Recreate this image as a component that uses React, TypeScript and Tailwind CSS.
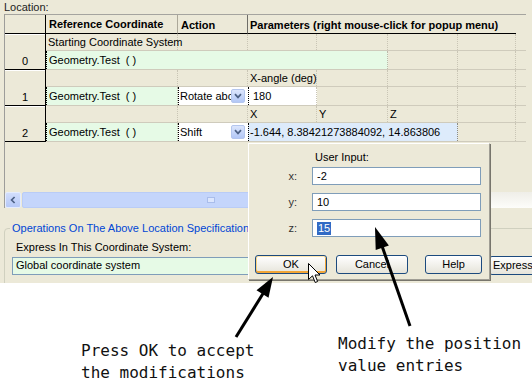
import React from 'react';

// column widths of the location grid (ref, action, then five parameter slots)
const W = ['w-[132px]', 'w-[70px]', 'w-[69px]', 'w-[71px]', 'w-[70px]', 'w-[58px]', 'w-[10px]'];
const dotted = 'border-r border-dotted border-[#C9C5B5]';
const green = 'bg-[#E6FAE6] border-l border-dotted border-l-black';

function DropBtn() {
  return (
    <span className="shrink-0 w-[14px] h-[14px] mr-[3px] rounded-[2px] border border-[#B4C6EE] bg-linear-to-b from-[#DCE6FD] to-[#B2C7F6] flex items-center justify-center">
      <svg width="8" height="6" viewBox="0 0 8 6">
        <path d="M1 1.2 L4 4.4 L7 1.2" stroke="#4D6185" strokeWidth="1.7" fill="none" />
      </svg>
    </span>
  );
}

function LabelRow({ texts }: { texts: string[] }) {
  return (
    <div className="flex h-[17px] border-b border-[#CFCBBC]">
      {W.map((w, i) => (
        <div
          key={i}
          className={`${w} shrink-0 flex items-center pl-[2px] whitespace-nowrap ${i < 6 ? dotted : ''}`}
        >
          {texts[i] ?? ''}
        </div>
      ))}
    </div>
  );
}

function RowHeader({ n }: { n: number }) {
  return (
    <div className="w-[41px] shrink-0 h-[36px] flex flex-col justify-end border-r border-b border-black shadow-[inset_0_1px_0_#fff]">
      <div className="h-[17px] pb-[1px] flex items-end justify-center">{n}</div>
    </div>
  );
}

function Combo({ text }: { text: string }) {
  return (
    <div className="w-[70px] shrink-0 bg-white border-l border-dotted border-l-black flex items-center">
      <span className="flex-1 overflow-hidden whitespace-nowrap pl-[1px]">{text}</span>
      <DropBtn />
    </div>
  );
}

function Geo({ w }: { w: string }) {
  return (
    <div className={`${w} shrink-0 ${green} border-r border-dotted border-r-[#BDB9AA] flex items-center pl-[2px] whitespace-pre`}>
      Geometry.Test  ( )
    </div>
  );
}

function LocationTable() {
  return (
    <div className="ml-[4px] w-[528px] h-[194px] border-l border-[#9D9D9A] flex flex-col">
      {/* header */}
      <div className="flex h-[20px] w-[521px] shrink-0 border-t border-[#A5A49F] font-bold">
        <div className="w-[41px] border-r border-b border-black" />
        <div className="w-[132px] border-r border-b border-r-[#ACA899] border-b-black pl-[3px] pt-[3px] overflow-hidden">
          Reference Coordinate System
        </div>
        <div className="w-[70px] border-r border-b border-r-[#6F6E68] border-b-black pl-[3px] pt-[4px]">Action</div>
        <div className="w-[268px] border-b border-black pl-[2px] pt-[4px] whitespace-nowrap overflow-hidden">
          Parameters (right mouse-click for popup menu)
        </div>
      </div>

      {/* row 0 */}
      <div className="flex w-[521px]">
        <RowHeader n={0} />
        <div className="flex-1 flex flex-col">
          <LabelRow texts={['Starting Coordinate System']} />
          <div className="flex h-[19px] border-b border-[#CFCBBC]">
            <Geo w="w-[342px]" />
            <div className={`w-[70px] ${dotted}`} />
            <div className={`w-[58px] ${dotted}`} />
            <div className="w-[10px]" />
          </div>
        </div>
      </div>

      {/* row 1 */}
      <div className="flex w-[521px]">
        <RowHeader n={1} />
        <div className="flex-1 flex flex-col">
          <LabelRow texts={['', '', 'X-angle (deg)']} />
          <div className="flex h-[19px] border-b border-[#CFCBBC]">
            <Geo w="w-[132px]" />
            <Combo text="Rotate abc" />
            <div className="w-[69px] bg-white border-l border-dotted border-l-black border-r border-r-[#C9C5B5] flex items-center pl-[4px]">180</div>
            <div className={`w-[71px] ${dotted}`} />
            <div className={`w-[70px] ${dotted}`} />
            <div className={`w-[58px] ${dotted}`} />
            <div className="w-[10px]" />
          </div>
        </div>
      </div>

      {/* row 2 */}
      <div className="flex w-[521px]">
        <RowHeader n={2} />
        <div className="flex-1 flex flex-col">
          <LabelRow texts={['', '', 'X', 'Y', 'Z']} />
          <div className="flex h-[19px] border-b border-[#CFCBBC]">
            <Geo w="w-[132px]" />
            <Combo text="Shift" />
            <div className="w-[210px] bg-[#DDEBFB] border-l border-dotted border-l-black border-r border-r-[#8F8C80] flex items-center pl-[1px] whitespace-nowrap">
              -1.644, 8.38421273884092, 14.863806
            </div>
            <div className={`w-[58px] ${dotted}`} />
            <div className="w-[10px]" />
          </div>
        </div>
      </div>

      <div className="flex-1" />

      {/* horizontal scroll bar */}
      <div className="h-[16px] flex shrink-0">
        <div className="w-[16px] rounded-[2px] border border-[#E4ECFE] bg-linear-to-b from-[#D2DEFC] to-[#B6C9F7] flex items-center justify-center">
          <svg width="6" height="8" viewBox="0 0 6 8">
            <path d="M4.6 1 L1.6 4 L4.6 7" stroke="#4D6185" strokeWidth="1.7" fill="none" />
          </svg>
        </div>
        <div className="w-[378px] ml-[1px] rounded-[2px] border border-[#B9CCF6] bg-[#C4D5FB] flex items-center justify-center">
          <div className="w-[8px] h-[6px] border border-[#A9BDEB] bg-[#DCE6FD]" />
        </div>
        <div className="flex-1 bg-linear-to-b from-[#EFEEE8] to-[#FDFDFA]" />
      </div>
    </div>
  );
}

function XpButton({ label, w, primary }: { label: string; w: string; primary?: boolean }) {
  return (
    <div
      className={`${w} h-[19px] rounded-[3px] border border-[#1C4A7E] bg-linear-to-b from-[#FFFFFF] to-[#E6E4DA] flex items-center justify-center ${
        primary ? 'shadow-[inset_0_1px_0_#FFE7B0,inset_0_-2px_0_#F1A537,inset_1px_0_0_#FAD27E,inset_-1px_0_0_#F1A537]' : ''
      }`}
    >
      {label}
    </div>
  );
}

function InputRow({ label, children }: { label: string; children: React.ReactNode }) {
  return (
    <div className="flex items-center h-[18px]">
      <div className="w-[63px] text-right pr-[15px] text-[#333]">{label}</div>
      <div className="w-[169px] h-[18px] bg-white border border-[#7F9DB9] flex items-center pl-[4px]">{children}</div>
    </div>
  );
}

function UserInputDialog() {
  return (
    <div className="absolute left-[248px] top-[143px] w-[242px] h-[137px] bg-[#ECE9D8] border border-t-[#FFFFFF] border-l-[#FFFFFF] border-r-[#A09E95] border-b-[#A09E95] shadow-[1px_1px_0_#77756C]">
      <div className="flex flex-col">
        <div className="mt-[7px] pl-[66px] h-[13px]">User Input:</div>
        <div className="mt-[3px] flex flex-col gap-[8px]">
          <InputRow label="x:">-2</InputRow>
          <InputRow label="y:">10</InputRow>
          <InputRow label="z:">
            <span className="bg-[#316AC5] text-white px-[1px]">15</span>
          </InputRow>
        </div>
        <div className="mt-[18px] flex pl-[6px]">
          <XpButton label="OK" w="w-[72px]" primary />
          <div className="ml-[9px]">
            <XpButton label="Cancel" w="w-[72px]" />
          </div>
          <div className="ml-[17px]">
            <XpButton label="Help" w="w-[57px]" />
          </div>
        </div>
      </div>
    </div>
  );
}

export default function App() {
  return (
    <div className="relative w-[532px] h-[380px] overflow-hidden bg-white text-black font-['Liberation_Sans',Arial,sans-serif] text-[11px] leading-[13px]">
      <div className="h-[283px] bg-[#ECE9D8] overflow-hidden">
        <div className="h-[14px] pl-[4px] pt-[1px] text-[#222]">Location:</div>
        <LocationTable />

        <fieldset className="mt-[14px] ml-[4px] w-[600px] h-[90px] border border-[#D0D0BF] rounded-[4px]">
          <legend className="ml-[5px] px-[2px] text-[#0046D5]">Operations On The Above Location Specification</legend>
          <div className="mt-[6px] pl-[11px] h-[13px]">Express In This Coordinate System:</div>
          <div className="mt-[2px] flex items-center">
            <div className="ml-[7px] w-[471px] h-[18px] border border-[#7F9DB9] bg-[#E6FAE6] flex items-center pl-[3px]">
              Global coordinate system
            </div>
            <div className="ml-[6px] w-[80px] h-[19px] rounded-[3px] border border-[#1C4A7E] bg-linear-to-b from-[#FFFFFF] to-[#E6E4DA] flex items-center pl-[3px] whitespace-nowrap">
              Express As...
            </div>
          </div>
        </fieldset>
      </div>

      {/* annotations */}
      <div className="flex pl-[81px] font-['DejaVu_Sans_Mono',monospace] text-[16px] leading-[22px] text-[#111]">
        <div className="w-[257px] shrink-0 mt-[57px] whitespace-pre">{'Press OK to accept\nthe modifications'}</div>
        <div className="mt-[50px] whitespace-pre">{'Modify the position\nvalue entries'}</div>
      </div>

      <UserInputDialog />

      {/* mouse pointer over OK */}
      <svg className="absolute left-[308px] top-[263px]" width="13" height="21" viewBox="0 0 13 21">
        <path d="M0.5 0.5 V16.5 L4.5 12.8 L7.2 19.5 L9.6 18.5 L7 12 H12 Z" fill="#fff" stroke="#000" strokeWidth="1" />
      </svg>

      {/* callout arrows */}
      <svg className="absolute left-0 top-0 pointer-events-none" width="532" height="380">
        <line x1="236" y1="337" x2="264" y2="292" stroke="#000" strokeWidth="3" />
        <polygon points="273,277 268.5,297.7 256.5,290.3" fill="#000" />
        <line x1="410" y1="326" x2="382" y2="246" stroke="#000" strokeWidth="3" />
        <polygon points="375,227 388.9,245.5 375.7,250.1" fill="#000" />
      </svg>
    </div>
  );
}
